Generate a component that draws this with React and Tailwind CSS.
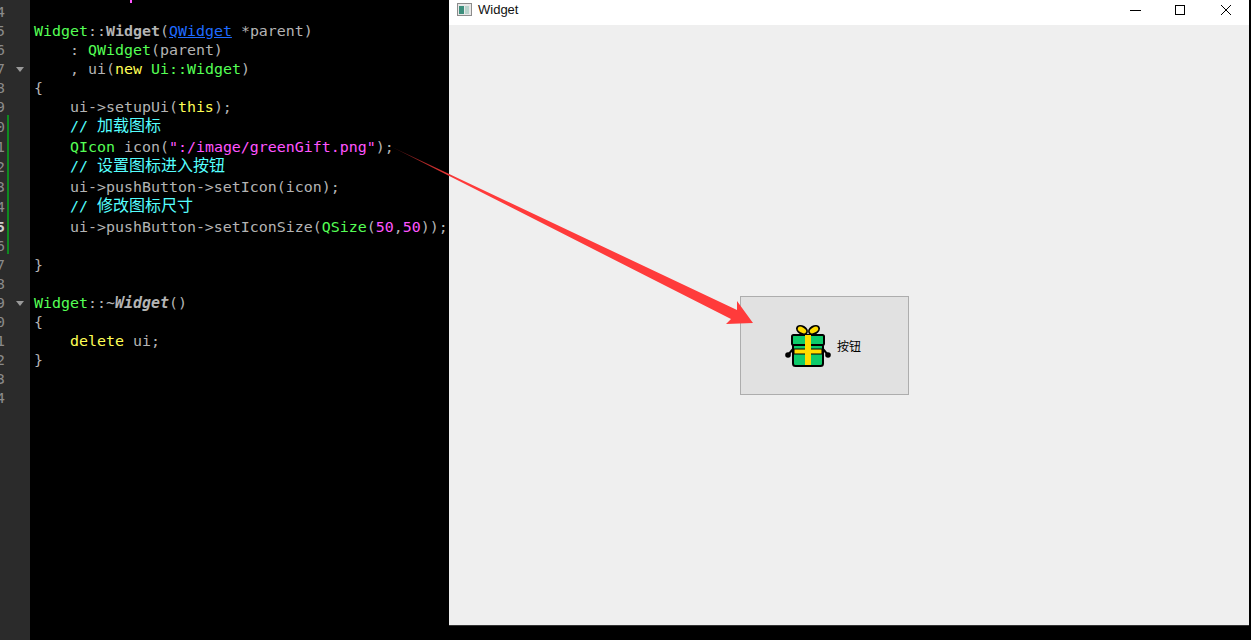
import React from 'react';

const G = ({ children }) => <span className="text-[#55ff55]">{children}</span>;
const Y = ({ children }) => <span className="text-[#ffff55]">{children}</span>;
const P = ({ children }) => <span className="text-[#ff55ff]">{children}</span>;
const C = ({ children }) => <span className="text-[#55ffff]">{children}</span>;
const CJK = ({ children }) => <span className="text-[16px] font-['Noto_Sans_CJK_SC',sans-serif]">{children}</span>;

const lines = [
  { n: '', h: 'h-[3px]', tick: true, code: null },
  { n: '4', h: 'h-[19px]', code: null },
  { n: '5', h: 'h-[19px]', code: <><G>Widget</G>::<b>Widget</b>(<span className="text-[#1f6bff] underline">QWidget</span> *parent)</> },
  { n: '6', h: 'h-[19px]', code: <>    : <G>QWidget</G>(parent)</> },
  { n: '7', h: 'h-[19px]', fold: true, code: <>    , ui(<Y>new</Y> <G>Ui::Widget</G>)</> },
  { n: '8', h: 'h-[19px]', code: '{' },
  { n: '9', h: 'h-[19px]', code: <>    ui-&gt;setupUi(<Y>this</Y>);</> },
  { n: '0', h: 'h-[20px]', bar: true, cjk: true, code: <C>    // <CJK>加载图标</CJK></C> },
  { n: '1', h: 'h-[20px]', bar: true, code: <>    <G>QIcon</G> icon(<P>":/image/greenGift.png"</P>);</> },
  { n: '2', h: 'h-[20px]', bar: true, cjk: true, code: <C>    // <CJK>设置图标进入按钮</CJK></C> },
  { n: '3', h: 'h-[20px]', bar: true, code: <>    ui-&gt;pushButton-&gt;setIcon(icon);</> },
  { n: '4', h: 'h-[20px]', bar: true, cjk: true, code: <C>    // <CJK>修改图标尺寸</CJK></C> },
  { n: '5', h: 'h-[20px]', bar: true, bold: true, code: <>    ui-&gt;pushButton-&gt;setIconSize(<G>QSize</G>(<P>50</P>,<P>50</P>));</> },
  { n: '6', h: 'h-[19px]', bar: true, code: null },
  { n: '7', h: 'h-[19px]', code: '}' },
  { n: '8', h: 'h-[19px]', code: null },
  { n: '9', h: 'h-[19px]', fold: true, code: <><G>Widget</G>::~<b><i>Widget</i></b>()</> },
  { n: '0', h: 'h-[19px]', code: '{' },
  { n: '1', h: 'h-[19px]', code: <>    <Y>delete</Y> ui;</> },
  { n: '2', h: 'h-[19px]', code: '}' },
  { n: '3', h: 'h-[19px]', code: null },
  { n: '4', h: 'h-[19px]', code: null },
];

const Editor = () => (
  <div className="w-[449px] h-[640px] shrink-0 flex flex-col overflow-hidden bg-black font-['DejaVu_Sans_Mono',monospace] text-[14.95px] text-[#b4b4b4] bg-[linear-gradient(to_right,#2b2b2b_30px,#000000_30px)]">
    {lines.map((l, i) => (
      <div key={i} className={`${l.h} flex items-center shrink-0`}>
        <div className="w-[30px] h-full shrink-0 flex items-center relative">
          <span className={`ml-[-4px] ${l.bold ? 'font-bold text-[#cccccc]' : 'text-[#8a8a8a]'}`}>{l.n}</span>
          {l.bar && <div className="absolute left-[7px] top-[-2px] bottom-[2px] w-[2px] bg-[#0f8a1f]" />}
          {l.fold && <div className="absolute left-[16px] top-[7px] w-0 h-0 border-l-[4px] border-r-[4px] border-t-[5px] border-l-transparent border-r-transparent border-t-[#9a9a9a]" />}
        </div>
        {l.tick && <div className="ml-[100px] w-[2px] h-[3px] bg-[#ff55ff]" />}
        {l.code !== null && (
          <pre className={`ml-[4px] font-['DejaVu_Sans_Mono',monospace] leading-none whitespace-pre ${l.cjk ? 'pb-[4px]' : ''}`}>{l.code}</pre>
        )}
      </div>
    ))}
  </div>
);

const GiftIcon = () => (
  <svg width="48" height="44" viewBox="0 0 48 44" className="shrink-0">
    <path d="M9 25 L4 31" stroke="#000" strokeWidth="2" fill="none" />
    <path d="M39 25 L44 31" stroke="#000" strokeWidth="2" fill="none" />
    <circle cx="4" cy="31" r="2.8" fill="#000" />
    <circle cx="44" cy="31" r="2.8" fill="#000" />
    <ellipse cx="18" cy="6" rx="5.5" ry="3.6" transform="rotate(30 18 6)" fill="#ffdc00" stroke="#000" strokeWidth="1.8" />
    <ellipse cx="30" cy="6" rx="5.5" ry="3.6" transform="rotate(-30 30 6)" fill="#ffdc00" stroke="#000" strokeWidth="1.8" />
    <rect x="9" y="20" width="30" height="22" rx="2.5" fill="#0ecb6a" stroke="#000" strokeWidth="2" />
    <rect x="8" y="11" width="32" height="10" rx="1.5" fill="#0ecb6a" stroke="#000" strokeWidth="2" />
    <rect x="10" y="25" width="28" height="5" fill="#ffdc00" stroke="#000" strokeWidth="1" />
    <rect x="21" y="11" width="6" height="30" fill="#ffdc00" />
  </svg>
);

const WinIcon = () => (
  <svg width="15" height="13" viewBox="0 0 15 13" className="shrink-0">
    <rect x="0.5" y="0.5" width="14" height="12" fill="#e8e8e8" stroke="#8c8c8c" />
    <rect x="2" y="3" width="5" height="8" fill="#3d8f7d" />
    <rect x="8" y="3" width="4" height="8" fill="#b9d3cc" />
  </svg>
);

const Window = () => (
  <div className="w-[800px] h-[626px] shrink-0 flex flex-col border-b border-[#333333]">
    <div className="h-[25px] bg-white flex items-center shrink-0 pl-[8px] pb-[6px]">
      <WinIcon />
      <span className="ml-[6px] text-[13px] text-[#111111] font-['Liberation_Sans',sans-serif]">Widget</span>
      <div className="ml-auto flex items-center">
        <svg width="12" height="12" viewBox="0 0 12 12" className="mr-[32px]"><path d="M0 6.5H11" stroke="#000" /></svg>
        <svg width="12" height="12" viewBox="0 0 12 12" className="mr-[34px]"><rect x="1.5" y="1.5" width="9" height="9" fill="none" stroke="#000" /></svg>
        <svg width="12" height="12" viewBox="0 0 12 12" className="mr-[17px]"><path d="M1 1L11 11M11 1L1 11" stroke="#000" /></svg>
      </div>
    </div>
    <div className="flex-1 bg-[#efefef] pl-[291px] pt-[271px]">
      <div className="w-[169px] h-[99px] bg-[#e1e1e1] border border-[#adadad] flex items-center justify-center pr-[4px]">
        <GiftIcon />
        <span className="ml-[5px] text-[12px] text-black font-['Noto_Sans_CJK_SC',sans-serif]">按钮</span>
      </div>
    </div>
  </div>
);

const App = () => (
  <div className="relative w-[1251px] h-[640px] overflow-hidden bg-black flex">
    <Editor />
    <Window />
    <svg className="absolute left-0 top-0 pointer-events-none" width="1251" height="640" viewBox="0 0 1251 640">
      <defs>
        <linearGradient id="tail" x1="392" y1="147" x2="520" y2="215" gradientUnits="userSpaceOnUse">
          <stop offset="0" stopColor="#5a1414" />
          <stop offset="0.5" stopColor="#ff3b3b" />
        </linearGradient>
      </defs>
      <path d="M392 147 L737 310 L737 301 L753 323 L726 324 L731 319 Z" fill="url(#tail)" />
    </svg>
  </div>
);

export default App;
